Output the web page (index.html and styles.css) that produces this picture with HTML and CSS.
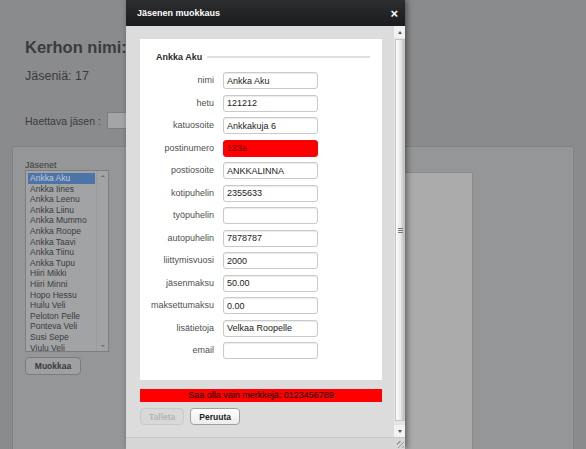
FILE: index.html
```html
<!DOCTYPE html>
<html lang="fi">
<head>
    <meta charset="UTF-8">
    <title>Kerho</title>
    <link rel="stylesheet" href="styles.css">
</head>
<body>
    <div class="page">
        <h1 class="club">Kerhon nimi:</h1>
        <div class="count">Jäseniä: 17</div>
        <div class="search">
            <span>Haettava jäsen :</span>
            <span class="search-input"></span>
        </div>

        <div class="panel">
            <div class="members">
                <div class="members-title">Jäsenet</div>
                <div class="listbox">
                    <div class="list-items">
                        <div class="item selected">Ankka Aku</div>
                        <div class="item">Ankka Iines</div>
                        <div class="item">Ankka Leenu</div>
                        <div class="item">Ankka Liinu</div>
                        <div class="item">Ankka Mummo</div>
                        <div class="item">Ankka Roope</div>
                        <div class="item">Ankka Taavi</div>
                        <div class="item">Ankka Tiinu</div>
                        <div class="item">Ankka Tupu</div>
                        <div class="item">Hiiri Mikki</div>
                        <div class="item">Hiiri Minni</div>
                        <div class="item">Hopo Hessu</div>
                        <div class="item">Huilu Veli</div>
                        <div class="item">Peloton Pelle</div>
                        <div class="item">Ponteva Veli</div>
                        <div class="item">Susi Sepe</div>
                        <div class="item">Viulu Veli</div>
                    </div>
                    <div class="list-scroll">
                        <span class="arrow up"></span>
                        <span class="arrow down"></span>
                    </div>
                </div>
                <button class="edit-btn">Muokkaa</button>
            </div>
            <div class="details"></div>
        </div>
    </div>

    <!-- muokkausdialogi -->
    <div class="dialog">
        <div class="dialog-title">
            <span>Jäsenen muokkaus</span>
            <span class="close">&#215;</span>
        </div>
        <div class="dialog-main">
            <div class="dialog-content">
                <div class="form-box">
                    <div class="legend">
                        <span>Ankka Aku</span>
                        <span class="legend-line"></span>
                    </div>
                    <div class="form">
                        <label>nimi</label><input type="text" value="Ankka Aku">
                        <label>hetu</label><input type="text" value="121212">
                        <label>katuosoite</label><input type="text" value="Ankkakuja 6">
                        <label>postinumero</label><input type="text" class="invalid" value="123a">
                        <label>postiosoite</label><input type="text" value="ANKKALINNA">
                        <label>kotipuhelin</label><input type="text" value="2355633">
                        <label>työpuhelin</label><input type="text" value="">
                        <label>autopuhelin</label><input type="text" value="7878787">
                        <label>liittymisvuosi</label><input type="text" value="2000">
                        <label>jäsenmaksu</label><input type="text" value="50.00">
                        <label>maksettumaksu</label><input type="text" value="0.00">
                        <label>lisätietoja</label><input type="text" value="Velkaa Roopelle">
                        <label>email</label><input type="text" value="">
                    </div>
                </div>
                <div class="error-bar">Saa olla vain merkkejä: 0123456789</div>
                <div class="buttons">
                    <button class="btn" disabled>Talleta</button>
                    <button class="btn">Peruuta</button>
                </div>
            </div>
            <div class="scrollbar">
                <div class="sb-arrow"><span class="tri up"></span></div>
                <div class="sb-thumb"><span class="grip"></span></div>
                <div class="sb-arrow"><span class="tri down"></span></div>
            </div>
        </div>
        <div class="dialog-footer">
            <span class="resize"></span>
        </div>
    </div>
</body>
</html>
```

FILE: styles.css
```css
body {
    margin: 0;
    height: 449px;
    overflow: hidden;
    background: #8a8b8c;
    font-family: "Liberation Sans", Arial, sans-serif;
    color: #3a3b3c;
}
.page {
    padding-top: 37px;
}
.club {
    margin: 0 0 0 25px;
    font-size: 16.5px;
    line-height: 20px;
    font-weight: bold;
}
.count {
    margin: 12px 0 0 25px;
    font-size: 12.5px;
    line-height: 15px;
}
.search {
    display: flex;
    align-items: center;
    gap: 6px;
    margin: 28px 0 0 25px;
    font-size: 10.5px;
}
.search-input {
    width: 60px;
    height: 15px;
    background: #a4a5a6;
    border: 1px solid #7c7d7e;
    border-radius: 2px;
}
.panel {
    display: flex;
    margin: 17px 0 0 12px;
    width: 560px;
    height: 310px;
    background: #959697;
    border: 1px solid #818283;
    border-bottom: none;
}
.members {
    padding: 14px 0 0 12px;
    width: 110px;
}
.members-title {
    font-size: 9px;
    line-height: 9px;
}
.listbox {
    display: flex;
    width: 82px;
    height: 180px;
    overflow: hidden;
    background: #a2a3a4;
    border: 1px solid #7d7e7f;
}
.list-items {
    flex: 1;
    display: grid;
    grid-auto-rows: 10.6px;
    align-content: start;
    padding: 2px 1px 0 2px;
}
.item {
    padding-left: 2px;
    overflow: hidden;
    white-space: nowrap;
    font-size: 8.5px;
    line-height: 10.6px;
    color: #3a3b3c;
}
.item.selected {
    background: #4d74a8;
    color: #c4cbd4;
}
.list-scroll {
    display: flex;
    flex-direction: column;
    justify-content: space-between;
    align-items: center;
    width: 11px;
    border-left: 1px solid #999a9b;
    padding: 4px 0;
}
.arrow {
    width: 0;
    height: 0;
    border-left: 2px solid transparent;
    border-right: 2px solid transparent;
}
.arrow.up {
    border-bottom: 2px solid #6e6f70;
}
.arrow.down {
    border-top: 2px solid #6e6f70;
}
.edit-btn {
    margin-top: 5px;
    width: 56px;
    height: 18px;
    padding: 0;
    font-family: inherit;
    font-size: 8.5px;
    font-weight: bold;
    color: #3a3b3c;
    background: #9fa0a1;
    border: 1px solid #7a7b7c;
    border-radius: 4px;
}
.details {
    margin: 25px 0 0 8px;
    width: 328px;
    background: #ababac;
    border: 1px solid #8a8b8c;
    border-bottom: none;
}

/* dialogi */
.dialog {
    position: absolute;
    left: 126px;
    top: 0;
    width: 279px;
    height: 449px;
    display: flex;
    flex-direction: column;
    background: #dcdcdc;
    box-shadow: 2px 0 6px rgba(0, 0, 0, 0.45);
}
.dialog-title {
    display: flex;
    justify-content: space-between;
    align-items: center;
    height: 26px;
    padding: 0 7px 0 11px;
    background: linear-gradient(#2c2e30, #1a1b1c);
    color: #fff;
    font-size: 9px;
    font-weight: bold;
}
.close {
    font-size: 13px;
    line-height: 13px;
}
.dialog-main {
    display: flex;
    height: 411px;
}
.dialog-content {
    flex: 1;
    padding: 13px 12px 0 14px;
}
.form-box {
    height: 341px;
    padding-top: 12px;
    box-sizing: border-box;
    background: #fff;
}
.legend {
    display: flex;
    align-items: center;
    gap: 5px;
    margin: 0 12px 0 16px;
    height: 12px;
    font-size: 9px;
    font-weight: bold;
    color: #2b2b2b;
}
.legend-line {
    flex: 1;
    height: 2px;
    background: #dedede;
}
.form {
    display: grid;
    grid-template-columns: 74px 95px;
    grid-auto-rows: 17px;
    column-gap: 9px;
    row-gap: 5.5px;
    margin-top: 9px;
}
.form label {
    text-align: right;
    font-size: 9px;
    line-height: 17px;
    color: #4f4f4f;
}
.form input {
    box-sizing: border-box;
    height: 17px;
    padding: 0 3px;
    font-family: inherit;
    font-size: 9px;
    color: #222;
    border: 1px solid #c9c9c9;
    border-radius: 3px;
    box-shadow: inset 0 1px 1px rgba(0, 0, 0, 0.08);
}
.form input.invalid {
    background: #ff0000;
    border-color: #ff0000;
    color: #6b0000;
}
.error-bar {
    margin-top: 9px;
    height: 13px;
    background: #ff0000;
    text-align: center;
    font-size: 9px;
    line-height: 13px;
    color: #000;
}
.buttons {
    display: flex;
    gap: 6px;
    margin-top: 6px;
}
.btn {
    height: 17px;
    padding: 0 8px;
    font-family: inherit;
    font-size: 8.5px;
    font-weight: bold;
    color: #222;
    background: linear-gradient(#ffffff, #ececec);
    border: 1px solid #a0a0a0;
    border-radius: 4px;
}
.btn:disabled {
    color: #b4b4b4;
    background: #d8d8d8;
    border-color: #cacaca;
}
.scrollbar {
    display: flex;
    flex-direction: column;
    width: 11px;
    background: #e4e4e4;
}
.sb-arrow {
    display: flex;
    justify-content: center;
    align-items: center;
    height: 12px;
    background: #f2f2f2;
}
.tri {
    width: 0;
    height: 0;
    border-left: 2.5px solid transparent;
    border-right: 2.5px solid transparent;
}
.tri.up {
    border-bottom: 3px solid #555;
}
.tri.down {
    border-top: 3px solid #555;
}
.sb-thumb {
    flex: 1;
    display: flex;
    justify-content: center;
    align-items: center;
    margin: 1px 0 4px 1px;
    background: linear-gradient(to right, #fdfdfd, #e6e6e6 60%, #bdbdbd);
    border: 1px solid #c4c4c4;
}
.grip {
    width: 5px;
    height: 5px;
    background: repeating-linear-gradient(#7a7a7a 0 1px, transparent 1px 2px);
}
.dialog-footer {
    flex: 1;
    display: flex;
    justify-content: flex-end;
    align-items: flex-end;
    background: #d6d6d6;
    border-top: 1px solid #c8c8c8;
}
.resize {
    width: 7px;
    height: 7px;
    margin: 0 1px 1px 0;
    background: repeating-linear-gradient(135deg, transparent 0 2px, #9a9a9a 2px 3px);
}
```
